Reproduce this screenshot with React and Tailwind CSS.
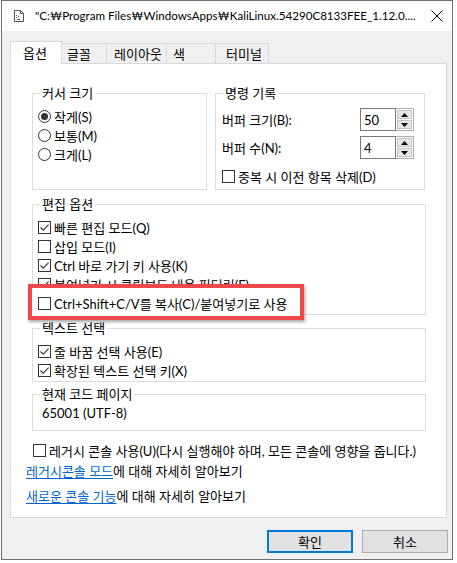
import React from 'react';

function Box({ checked }) {
  return (
    <span className="w-[13px] h-[13px] shrink-0 border border-[#333333] bg-white flex items-center justify-center">
      {checked && (
        <svg width="11" height="11" viewBox="0 0 11 11">
          <path d="M1.5 5.5 L4.2 8.2 L9.6 2.6" stroke="#333333" strokeWidth="1.1" fill="none" />
        </svg>
      )}
    </span>
  );
}

function Check({ checked, children, className = '' }) {
  return (
    <div className={`flex items-center h-[19px] ${className}`}>
      <Box checked={checked} />
      <span className="ml-[3px] leading-[16px] whitespace-nowrap">{children}</span>
    </div>
  );
}

function Radio({ checked, children }) {
  return (
    <div className="flex items-center h-[19px]">
      <span className="w-[13px] h-[13px] shrink-0 rounded-full border border-[#333333] bg-white flex items-center justify-center">
        {checked && <span className="w-[7px] h-[7px] rounded-full bg-[#333333]" />}
      </span>
      <span className="ml-[3px] leading-[16px]">{children}</span>
    </div>
  );
}

function Group({ title, className = '', children }) {
  return (
    <fieldset className={`border border-[#dcdcdc] ${className}`}>
      <legend className="ml-[7px] px-[2px] leading-[16px]">{title}</legend>
      {children}
    </fieldset>
  );
}

function Spinner({ value }) {
  return (
    <div className="flex h-[23px] w-[54px]">
      <div className="flex-1 border border-[#7a7a7a] bg-white flex items-center pl-[3px] leading-[16px]">{value}</div>
      <div className="w-[18px] flex flex-col border-y border-r border-[#adadad] bg-white p-px gap-px">
        <span className="flex-1 bg-[#e6e6e6] border border-[#c4c4c4] flex items-center justify-center">
          <svg width="7" height="4" viewBox="0 0 7 4"><path d="M0 4 L3.5 0 L7 4 Z" fill="#000" /></svg>
        </span>
        <span className="flex-1 bg-[#e6e6e6] border border-[#c4c4c4] flex items-center justify-center">
          <svg width="7" height="4" viewBox="0 0 7 4"><path d="M0 0 L3.5 4 L7 0 Z" fill="#000" /></svg>
        </span>
      </div>
    </div>
  );
}

const tabs = [
  { label: '옵션', w: 'w-[52px]', pl: 'pl-[12px]', active: true },
  { label: '글꼴', w: 'w-[45px]', pl: 'pl-[5px]' },
  { label: '레이아웃', w: 'w-[60px]', pl: 'pl-[7px]' },
  { label: '색', w: 'w-[49px]', pl: 'pl-[6px]' },
  { label: '터미널', w: 'w-[53px]', pl: 'pl-[10px]' },
];

export default function App() {
  return (
    <div className="w-[457px] h-[563px] bg-white text-[13px] text-black font-['Lato','Noto_Sans_CJK_KR',sans-serif]">
      <div className="ml-px w-[452px] h-[560px] border border-[#707070] flex flex-col">
        {/* title bar */}
        <div className="h-[30px] bg-white flex items-center pl-[12px] pr-[9px] shrink-0">
          <svg width="10" height="12" viewBox="0 0 10 12" className="shrink-0">
            <path d="M0.5 0.5 H6.5 L9.5 3.5 V11.5 H0.5 Z" fill="#fff" stroke="#555" />
            <path d="M6.5 0.5 V3.5 H9.5" fill="none" stroke="#555" />
            <rect x="2" y="5" width="1" height="1" fill="#555" />
            <rect x="4" y="6" width="1" height="1" fill="#555" />
            <rect x="2" y="7" width="1" height="1" fill="#555" />
            <rect x="3" y="9" width="3" height="1" fill="#555" />
          </svg>
          <span className="ml-[11px] text-[11.6px] leading-[16px] whitespace-nowrap">"C:₩Program Files₩WindowsApps₩KaliLinux.54290C8133FEE_1.12.0....</span>
          <svg width="12" height="12" viewBox="0 0 12 12" className="ml-auto shrink-0">
            <path d="M0.5 0.5 L11.5 11.5 M11.5 0.5 L0.5 11.5" stroke="#000" strokeWidth="1" />
          </svg>
        </div>

        {/* body */}
        <div className="flex-1 bg-[#f0f0f0] pt-[10px] pl-[8px] pr-[5px]">
          <div className="flex h-[22px]">
            {tabs.map(t =>
              t.active ? (
                <div key={t.label} className={`${t.w} ${t.pl} h-[23px] relative z-10 bg-white border-t border-x border-[#d9d9d9] flex items-center leading-[16px]`}>
                  {t.label}
                </div>
              ) : (
                <div key={t.label} className={`${t.w} ${t.pl} mt-[2px] h-[20px] bg-[#f0f0f0] border-t border-r border-[#d9d9d9] flex items-center leading-[16px]`}>
                  {t.label}
                </div>
              )
            )}
          </div>

          <div className="h-[455px] border border-[#d9d9d9] bg-white pl-[15px] pr-[14px]">
            <div className="px-[6px]">
              <div className="flex gap-[8px] mt-[21px]">
                <Group title="커서 크기" className="w-[175px] h-[105px]">
                  <div className="pl-[5px] pt-[6px]">
                    <Radio checked>작게(S)</Radio>
                    <Radio>보통(M)</Radio>
                    <Radio>크게(L)</Radio>
                  </div>
                </Group>
                <Group title="명령 기록" className="w-[210px] h-[105px]">
                  <div className="pl-[6px] pr-[10px] pt-[7px]">
                    <div className="flex items-center justify-between">
                      <span className="leading-[16px]">버퍼 크기(B):</span>
                      <Spinner value="50" />
                    </div>
                    <div className="flex items-center justify-between mt-[5px]">
                      <span className="leading-[16px]">버퍼 수(N):</span>
                      <Spinner value="4" />
                    </div>
                    <Check className="mt-[8px]">중복 시 이전 항목 삭제(D)</Check>
                  </div>
                </Group>
              </div>

              <Group title="편집 옵션" className="mt-[6px]">
                <div className="pl-[5px] pt-[6px] pb-px">
                  <Check checked>빠른 편집 모드(Q)</Check>
                  <Check>삽입 모드(I)</Check>
                  <Check checked>Ctrl 바로 가기 키 사용(K)</Check>
                  <Check checked>붙여넣기 시 클립보드 내용 필터링(F)</Check>
                  <div className="relative">
                    <div className="absolute top-[-10px] left-[-10px] w-[276px] h-[36px] border-[4px] border-[#f04848] bg-white shadow-[1px_2px_3px_rgba(0,0,0,0.35)]" />
                    <Check className="relative">Ctrl+Shift+C/V를 복사(C)/붙여넣기로 사용</Check>
                  </div>
                </div>
              </Group>

              <Group title="텍스트 선택" className="mt-[5px]">
                <div className="pl-[5px] pt-[6px] pb-px">
                  <Check checked className="h-[18px]">줄 바꿈 선택 사용(E)</Check>
                  <Check checked className="h-[18px]">확장된 텍스트 선택 키(X)</Check>
                </div>
              </Group>

              <Group title="현재 코드 페이지" className="mt-[4px]">
                <div className="pl-[9px] pt-[2px] pb-[8px] h-[28px] flex items-center leading-[16px]">65001 (UTF-8)</div>
              </Group>
            </div>

            <Check className="mt-[10px] ml-[7px]">레거시 콘솔 사용(U)(다시 실행해야 하며, 모든 콘솔에 영향을 줍니다.)</Check>
            <div className="mt-[2px] h-[18px] flex items-center leading-[16px]">
              <a className="text-[#0066cc] underline underline-offset-2">레거시콘솔 모드</a>
              <span>에 대해 자세히 알아보기</span>
            </div>
            <div className="mt-[7px] h-[18px] flex items-center leading-[16px]">
              <a className="text-[#0066cc] underline underline-offset-2">새로운 콘솔 기능</a>
              <span>에 대해 자세히 알아보기</span>
            </div>
          </div>

          <div className="flex justify-end gap-[9px] mt-[12px] mr-[-1px]">
            <button className="w-[86px] h-[23px] border-2 border-[#0078d7] bg-[#e1e1e1] flex items-center justify-center leading-[16px]">확인</button>
            <button className="w-[86px] h-[23px] border border-[#adadad] bg-[#e1e1e1] flex items-center justify-center leading-[16px]">취소</button>
          </div>
        </div>
      </div>
    </div>
  );
}
